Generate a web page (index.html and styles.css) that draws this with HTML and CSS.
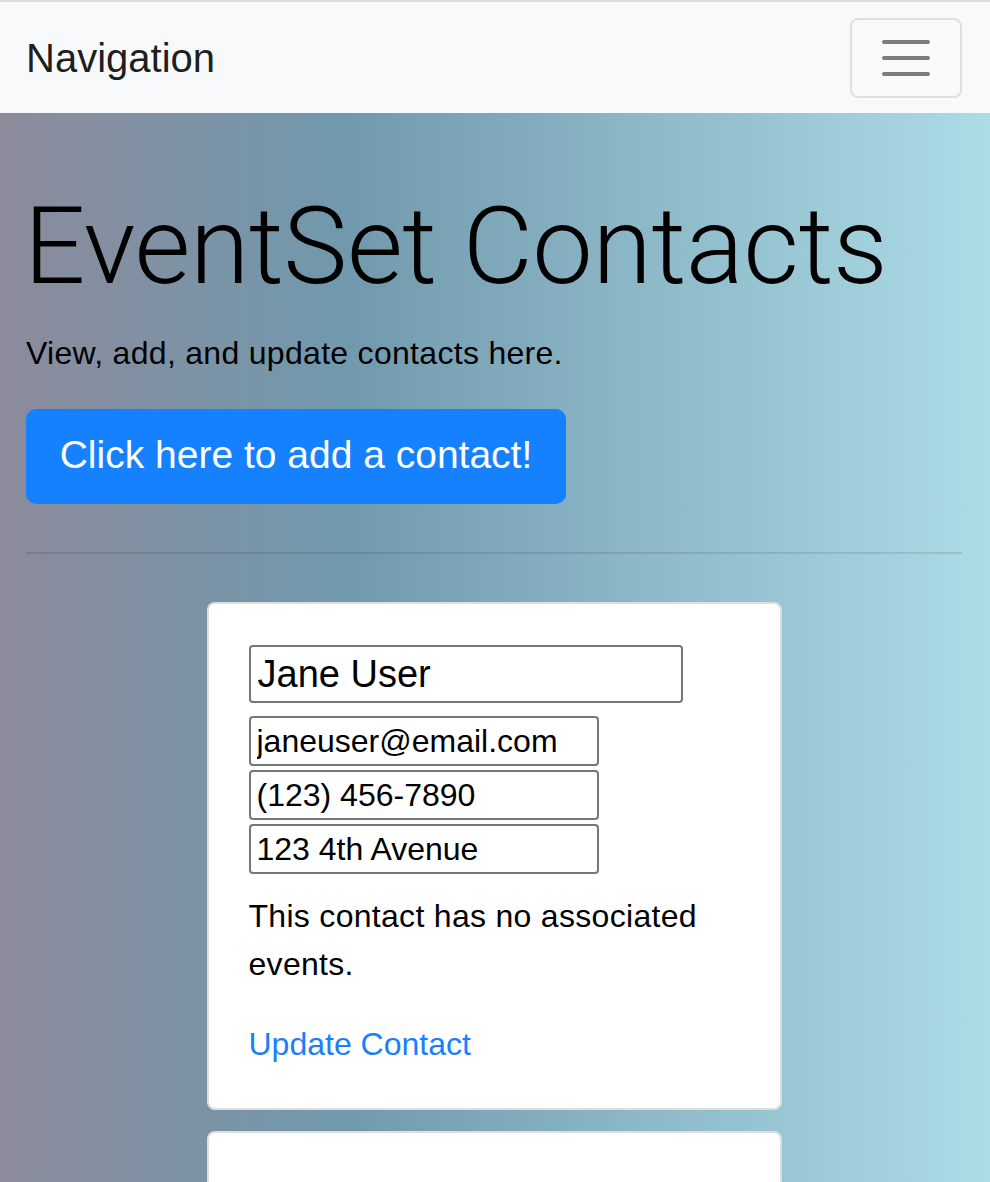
FILE: index.html
```html
<!DOCTYPE html>
<html lang="en">
<head>
<meta charset="utf-8">
<title>EventSet Contacts</title>
<link rel="stylesheet" href="styles.css">
</head>
<body>
<nav class="navbar">
  <a class="brand" href="#">Navigation</a>
  <button class="toggler" type="button" aria-label="Toggle navigation">
    <svg class="toggler-icon" width="60" height="60" viewBox="0 0 60 60">
      <path d="M8 14h44M8 30h44M8 46h44" stroke="rgba(0,0,0,0.5)" stroke-width="4" stroke-linecap="round" fill="none"/>
    </svg>
  </button>
</nav>
<main class="hero">
  <h1 class="display">EventSet Contacts</h1>
  <p class="lead">View, add, and update contacts here.</p>
  <a class="btn-primary" href="#">Click here to add a contact!</a>
  <hr class="divider">
  <section class="cards">
    <div class="card">
      <input class="field field-name" type="text" value="Jane User">
      <input class="field" type="text" value="janeuser@email.com">
      <input class="field" type="text" value="(123) 456-7890">
      <input class="field" type="text" value="123 4th Avenue">
      <p class="note">This contact has no associated events.</p>
      <div class="action"><a class="link" href="#">Update Contact</a></div>
    </div>
    <div class="card">
      <div class="card-title">Jim Halpert</div>
    </div>
  </section>
</main>
</body>
</html>
```

FILE: styles.css
```css
html, body {
  margin: 0;
  padding: 0;
}
body {
  font-family: "Liberation Sans", Arial, sans-serif;
  font-size: 32px;
  line-height: 48px;
  color: #000;
  border-top: 2px solid #dcdddf;
  min-height: 1180px;
  background: linear-gradient(to right, #8b8b9b 0%, #7199ad 35%, #acdce6 100%);
}
.navbar {
  background: #f8f9fa;
  height: 111px;
  display: flex;
  align-items: center;
  justify-content: space-between;
  padding: 0 28px 0 26px;
}
.brand {
  font-size: 40px;
  line-height: 60px;
  color: rgba(0,0,0,0.9);
  text-decoration: none;
}
.toggler {
  width: 112px;
  height: 80px;
  padding: 8px 24px;
  box-sizing: border-box;
  border: 2px solid rgba(0,0,0,0.1);
  border-radius: 8px;
  background: transparent;
  display: flex;
  align-items: center;
  justify-content: center;
}
.toggler-icon {
  display: block;
  flex: none;
}
.hero {
  padding: 64px 28px 0 26px;
}
.display {
  font-family: "Roboto", "Liberation Sans", sans-serif;
  font-weight: 300;
  font-size: 108px;
  line-height: 134px;
  letter-spacing: -0.4px;
  margin: 2px 0 16px -2px;
  white-space: nowrap;
}
.lead {
  margin: 0 0 32px 0;
  letter-spacing: 0.3px;
}
.btn-primary {
  display: inline-block;
  box-sizing: border-box;
  width: 540px;
  height: 95px;
  background: #1681ff;
  color: #fff;
  font-size: 39px;
  line-height: 60px;
  padding: 16px 0;
  text-align: center;
  border-radius: 10px;
  text-decoration: none;
}
.divider {
  border: 0;
  border-top: 2px solid rgba(0,0,0,0.1);
  margin: 48px 0 48px 0;
}
.cards {
  display: flex;
  flex-direction: column;
  align-items: center;
  gap: 21px;
}
.card {
  width: 575px;
  box-sizing: border-box;
  background: #fff;
  border: 2px solid rgba(0,0,0,0.13);
  border-radius: 8px;
  padding: 41px 40px 40px 40px;
  display: flex;
  flex-direction: column;
  align-items: flex-start;
}
.field {
  display: block;
  box-sizing: border-box;
  width: 350px;
  height: 50px;
  margin: 0 0 4px 0;
  padding: 0 6px;
  border: 2px solid #767676;
  border-radius: 4px;
  font-family: "Liberation Sans", Arial, sans-serif;
  font-size: 32px;
  color: #000;
  background: #fff;
}
.field-name {
  width: 434px;
  height: 58px;
  font-size: 38px;
  margin-bottom: 13px;
  padding: 0 7px;
}
.note {
  margin: 14px 0 32px 0;
  letter-spacing: 0.3px;
}
.link {
  color: #1a7ffb;
  text-decoration: none;
}
.card-title {
  font-size: 40px;
  line-height: 48px;
  margin-top: 0;
}
```
